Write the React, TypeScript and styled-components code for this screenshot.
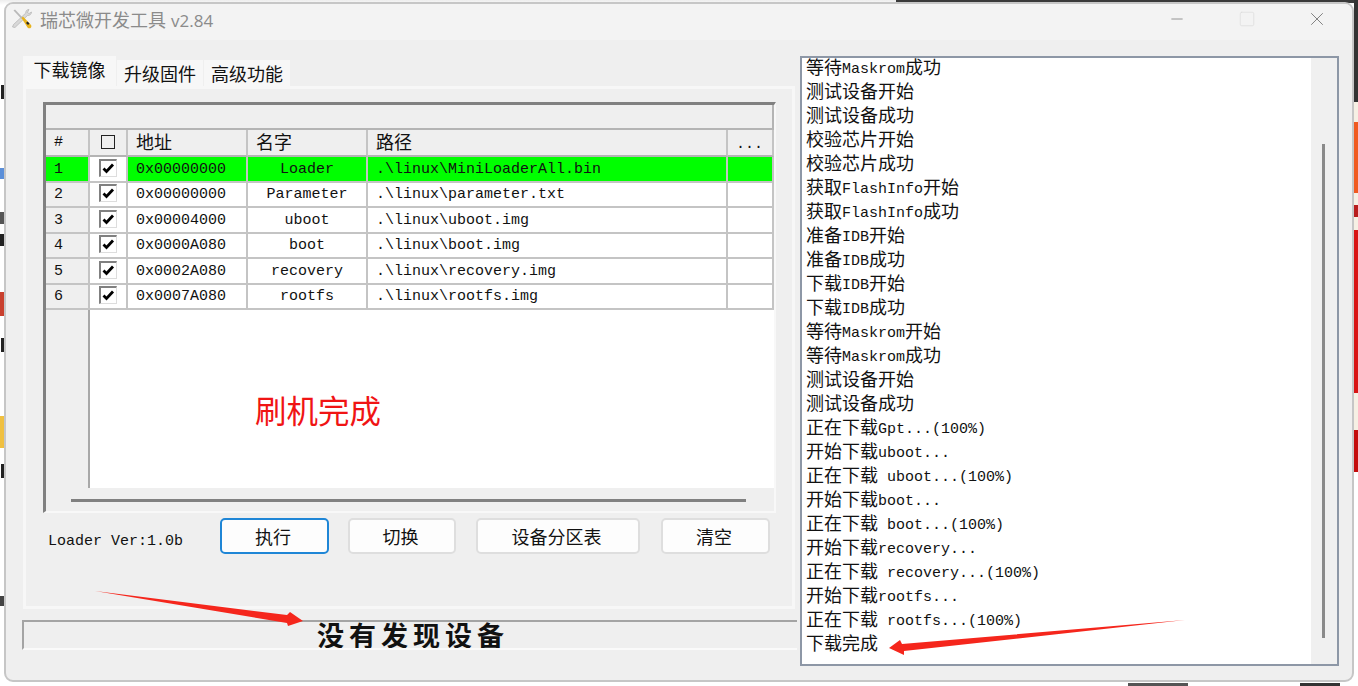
import { createGlobalStyle, styled } from 'styled-components';
import { Minus, Square, X } from 'lucide-react';

const GlobalStyle = createGlobalStyle`
  html, body { margin: 0; padding: 0; background: #fff; }
  * { box-sizing: border-box; }
`;

const CJK = `"Noto Sans CJK SC", "Liberation Sans", sans-serif`;
const MONO = `"Liberation Mono", "Noto Sans CJK SC", monospace`;

const Page = styled.div`
  position: relative;
  width: 1358px;
  height: 686px;
  padding: 2px 4px 4px;
  overflow: hidden;
  background: linear-gradient(#ededed, #fff 5px);
`;

const DesktopBit = styled.div<{ $x: number; $y: number; $w: number; $h: number; $c: string }>`
  position: absolute;
  left: ${(p) => p.$x}px;
  top: ${(p) => p.$y}px;
  width: ${(p) => p.$w}px;
  height: ${(p) => p.$h}px;
  background: ${(p) => p.$c};
`;

const Window = styled.div`
  position: relative;
  display: flex;
  flex-direction: column;
  width: 1350px;
  height: 680px;
  border: 2px solid #c6c6c6;
  border-radius: 9px;
  background: #efefef;
  overflow: hidden;
`;

const TitleBar = styled.div`
  flex: none;
  display: flex;
  align-items: center;
  height: 36px;
  padding: 0 0 6px 5px;
  background: #f3f3f3;
`;

const TitleText = styled.div`
  margin-left: 7px;
  font: 18px ${CJK};
  color: #8b8b8b;
  span { margin-left: 5px; font-family: "Open Sans", sans-serif; font-size: 17px; }
`;

const WinControls = styled.div`
  margin-left: auto;
  display: flex;
  align-items: center;
  color: #777;
`;

const WinControl = styled.div<{ $w: number; $faded?: boolean }>`
  width: ${(p) => p.$w}px;
  display: flex;
  justify-content: center;
  color: ${(p) => (p.$faded ? '#dcdcdc' : '#777')};
`;

const Content = styled.div`
  flex: 1;
  display: flex;
  gap: 3px;
  padding: 16px 0 0 16px;
`;

const LeftColumn = styled.div`
  width: 775px;
  flex: none;
  display: flex;
  flex-direction: column;
`;

const Tabs = styled.div`
  height: 30px;
  display: flex;
  align-items: flex-end;
  padding-left: 1px;
  gap: 1px;
`;

const Tab = styled.div<{ $active?: boolean; $w: number }>`
  width: ${(p) => p.$w}px;
  height: ${(p) => (p.$active ? 30 : 26)}px;
  text-align: center;
  font: 18px/26px ${CJK};
  color: #111;
  background: #f7f7f7;
`;

const TabPanel = styled.div`
  width: 772px;
  height: 523px;
  margin-left: 1px;
  padding: 13px 16px 0 17px;
  background: #efefef;
  border: 3px solid #f7f7f7;
`;

const TableFrame = styled.div`
  display: flex;
  flex-direction: column;
  width: 733px;
  height: 411px;
  border-top: 3px solid #808080;
  border-left: 3px solid #808080;
  border-right: 2px solid #f8f8f8;
  border-bottom: 2px solid #f8f8f8;
`;

const EmptyHeader = styled.div`
  flex: none;
  height: 25px;
  border-right: 2px solid #b4b4b4;
  border-bottom: 2px solid #b4b4b4;
`;

const Row = styled.div`
  flex: none;
  display: grid;
  grid-template-columns: 44px 38px 120px 120px 360px 46px;
`;

const HeadCell = styled.div<{ $center?: boolean; $pad?: number }>`
  height: 27px;
  padding: 0 0 3px ${(p) => p.$pad ?? 8}px;
  display: flex;
  align-items: center;
  justify-content: ${(p) => (p.$center ? 'center' : 'flex-start')};
  border-right: 2px solid #c4c4c4;
  border-bottom: 2px solid #b4b4b4;
  font: 18px ${CJK};
  color: #111;
`;

const HeadGlyph = styled.span<{ $low?: boolean }>`
  font: 15px ${MONO};
  margin-top: ${(p) => (p.$low ? 6 : 2)}px;
`;

const HeadBox = styled.div`
  width: 14px;
  height: 14px;
  margin-top: 2px;
  border: 1.5px solid #222;
`;

const Cell = styled.div<{ $green?: boolean; $gray?: boolean; $pad?: number; $center?: boolean; $h: number }>`
  height: ${(p) => p.$h}px;
  padding-left: ${(p) => p.$pad ?? 8}px;
  display: flex;
  align-items: center;
  justify-content: ${(p) => (p.$center ? 'center' : 'flex-start')};
  background: ${(p) => (p.$green ? '#00ff00' : p.$gray ? '#efefef' : '#fff')};
  border-right: 2px solid #c4c4c4;
  border-bottom: 2px solid #c4c4c4;
  font: 15px ${MONO};
  color: #111;
  white-space: pre;
`;

const CheckBox = styled.div`
  width: 18px;
  height: 18px;
  margin-bottom: 3px;
  display: flex;
  align-items: center;
  justify-content: center;
  background: #fff;
  border-top: 2px solid #808080;
  border-left: 2px solid #808080;
  border-right: 1px solid #ddd;
  border-bottom: 1px solid #ddd;
`;

const BlankArea = styled.div`
  flex: 1;
  display: flex;
`;

const BlankGutter = styled.div`
  width: 44px;
  flex: none;
  background: #efefef;
  border-right: 2px solid #a8a8a8;
`;

const BlankBody = styled.div`
  flex: 1;
  padding: 77px 0 0 165px;
  background: #fff;
`;

const DoneText = styled.div`
  font: 31.5px/44px ${CJK};
  color: #f01414;
`;

const ScrollRow = styled.div`
  flex: none;
  height: 23px;
  padding: 11px 28px 0 25px;
`;

const ScrollLine = styled.div`
  height: 3px;
  background: #808080;
`;

const Toolbar = styled.div`
  display: flex;
  align-items: center;
  height: 36px;
  margin-top: 5px;
  padding-left: 5px;
`;

const LoaderVer = styled.div`
  width: 172px;
  padding-top: 11px;
  font: 15px ${MONO};
  color: #111;
`;

const Button = styled.button<{ $w: number; $gap?: number; $primary?: boolean }>`
  width: ${(p) => p.$w}px;
  height: 36px;
  margin-right: ${(p) => p.$gap ?? 0}px;
  padding: 0 3px 0 0;
  border: ${(p) => (p.$primary ? '2px solid #1f86d6' : '2px solid #dedede')};
  border-radius: 5px;
  background: #fdfdfd;
  font: 18px ${CJK};
  color: #111;
`;

const StatusBar = styled.div`
  width: 775px;
  height: 30px;
  margin-top: 11px;
  padding-left: 5px;
  overflow: hidden;
  text-align: center;
  border-top: 2px solid #a4a4a4;
  border-left: 2px solid #a4a4a4;
  border-bottom: 2px solid #fafafa;
  font: 700 27px/26px ${CJK};
  letter-spacing: 5px;
  color: #111;
`;

const ListBox = styled.div`
  display: flex;
  width: 539px;
  height: 610px;
  border: 2px solid #8d97a6;
  background: #fff;
`;

const LogLines = styled.div`
  flex: 1;
  padding-left: 4px;
`;

const LogLine = styled.div`
  height: 24px;
  font: 18px/16px ${CJK};
  color: #111;
  white-space: pre;
  span { font: 15px/16px ${MONO}; vertical-align: 1px; }
`;

const ScrollTrack = styled.div`
  flex: none;
  width: 26px;
  padding: 86px 0 26px 11px;
  background: #f0f0f0;
`;

const ScrollThumb = styled.div`
  width: 3px;
  height: 100%;
  background: #8a8a8a;
`;

const Arrows = styled.svg`
  position: absolute;
  inset: 0;
  pointer-events: none;
`;

type Part = { id: number; addr: string; name: string; path: string };

const parts: Part[] = [
  { id: 1, addr: '0x00000000', name: 'Loader', path: '.\\linux\\MiniLoaderAll.bin' },
  { id: 2, addr: '0x00000000', name: 'Parameter', path: '.\\linux\\parameter.txt' },
  { id: 3, addr: '0x00004000', name: 'uboot', path: '.\\linux\\uboot.img' },
  { id: 4, addr: '0x0000A080', name: 'boot', path: '.\\linux\\boot.img' },
  { id: 5, addr: '0x0002A080', name: 'recovery', path: '.\\linux\\recovery.img' },
  { id: 6, addr: '0x0007A080', name: 'rootfs', path: '.\\linux\\rootfs.img' },
];

const logs = [
  '等待Maskrom成功',
  '测试设备开始',
  '测试设备成功',
  '校验芯片开始',
  '校验芯片成功',
  '获取FlashInfo开始',
  '获取FlashInfo成功',
  '准备IDB开始',
  '准备IDB成功',
  '下载IDB开始',
  '下载IDB成功',
  '等待Maskrom开始',
  '等待Maskrom成功',
  '测试设备开始',
  '测试设备成功',
  '正在下载Gpt...(100%)',
  '开始下载uboot...',
  '正在下载 uboot...(100%)',
  '开始下载boot...',
  '正在下载 boot...(100%)',
  '开始下载recovery...',
  '正在下载 recovery...(100%)',
  '开始下载rootfs...',
  '正在下载 rootfs...(100%)',
  '下载完成',
];

// bits of whatever is behind the window, visible at the screenshot edges
const desktopBits = [
  { x: 896, y: 0, w: 462, h: 3, c: '#3a3a3a' },
  { x: 1354, y: 0, w: 4, h: 102, c: '#333' },
  { x: 1354, y: 102, w: 4, h: 370, c: '#f6f0e4' },
  { x: 1354, y: 122, w: 4, h: 71, c: '#f05a20' },
  { x: 1354, y: 205, w: 4, h: 12, c: '#b81c1c' },
  { x: 1354, y: 230, w: 4, h: 163, c: '#d81414' },
  { x: 1354, y: 430, w: 4, h: 42, c: '#c40c0c' },
  { x: 0, y: 168, w: 4, h: 11, c: '#5b8fd9' },
  { x: 0, y: 292, w: 4, h: 24, c: '#c9402e' },
  { x: 0, y: 416, w: 4, h: 32, c: '#f0c040' },
  { x: 1, y: 85, w: 3, h: 14, c: '#222' },
  { x: 0, y: 212, w: 4, h: 12, c: '#555' },
  { x: 0, y: 234, w: 4, h: 12, c: '#222' },
  { x: 1, y: 338, w: 3, h: 14, c: '#222' },
  { x: 1, y: 464, w: 3, h: 14, c: '#222' },
  { x: 0, y: 596, w: 4, h: 10, c: '#444' },
  { x: 1300, y: 683, w: 40, h: 3, c: '#333' },
  { x: 1128, y: 683, w: 60, h: 3, c: '#555' },
];

// latin runs are set smaller than the chinese, like the bitmap font in the original
function LogText({ text }: { text: string }) {
  return (
    <LogLine>
      {text.split(/([\x20-\x7e]+)/).map((chunk, i) =>
        /^[\x20-\x7e]+$/.test(chunk) ? <span key={i}>{chunk}</span> : chunk
      )}
    </LogLine>
  );
}

function ToolIcon() {
  return (
    <svg width="22" height="22" viewBox="0 0 22 22">
      <path d="M18 1.500c-2 0-3.500 1.500-3.200 3.500L2.500 16.500 1.500 19l2.500.5L16.500 7.500c2 .3 4-1.200 4-3.500l-2.500 1.500-1.500-1L18 1.500z" fill="#d8d8d8" stroke="#aaa" strokeWidth="0.6" />
      <path d="M2.500 2.500l1.500-1 7.500 8-1 1.500z" fill="#b9b9b9" />
      <path d="M10.500 10l1.500-1.500 8 8.500c.8 1 .2 2.500-.5 3s-2 .5-3-.5z" fill="#e8b31c" />
      <path d="M15 15l1.500-1.500 2 2-1.500 1.500z" fill="#222" />
    </svg>
  );
}

function Check() {
  return (
    <svg width="13" height="13" viewBox="0 0 13 13">
      <path d="M1.500 6.500l3 3L11 2.500" fill="none" stroke="#000" strokeWidth="2.800" />
    </svg>
  );
}

export default function App() {
  return (
    <Page>
      <GlobalStyle />
      {desktopBits.map((b, i) => (
        <DesktopBit key={i} $x={b.x} $y={b.y} $w={b.w} $h={b.h} $c={b.c} />
      ))}
      <Window>
        <TitleBar>
          <ToolIcon />
          <TitleText>
            瑞芯微开发工具<span>v2.84</span>
          </TitleText>
          <WinControls>
            <WinControl $w={70}>
              <Minus size={18} strokeWidth={1} />
            </WinControl>
            <WinControl $w={70} $faded>
              <Square size={18} strokeWidth={1} />
            </WinControl>
            <WinControl $w={70}>
              <X size={22} strokeWidth={1} />
            </WinControl>
          </WinControls>
        </TitleBar>
        <Content>
          <LeftColumn>
            <Tabs>
              <Tab $active $w={93}>下载镜像</Tab>
              <Tab $w={86}>升级固件</Tab>
              <Tab $w={86}>高级功能</Tab>
            </Tabs>
            <TabPanel>
              <TableFrame>
                <EmptyHeader />
                <Row>
                  <HeadCell><HeadGlyph>#</HeadGlyph></HeadCell>
                  <HeadCell $pad={0} $center><HeadBox /></HeadCell>
                  <HeadCell>地址</HeadCell>
                  <HeadCell>名字</HeadCell>
                  <HeadCell>路径</HeadCell>
                  <HeadCell><HeadGlyph $low>...</HeadGlyph></HeadCell>
                </Row>
                {parts.map((part) => {
                  const green = part.id === 1;
                  const h = part.id % 2 === 0 ? 25 : 26;
                  return (
                    <Row key={part.id}>
                      <Cell $h={h} $green={green} $gray={!green}>{part.id}</Cell>
                      <Cell $h={h} $pad={0} $center><CheckBox><Check /></CheckBox></Cell>
                      <Cell $h={h} $green={green}>{part.addr}</Cell>
                      <Cell $h={h} $green={green} $pad={0} $center>{part.name}</Cell>
                      <Cell $h={h} $green={green}>{part.path}</Cell>
                      <Cell $h={h} $green={green} />
                    </Row>
                  );
                })}
                <BlankArea>
                  <BlankGutter />
                  <BlankBody>
                    <DoneText>刷机完成</DoneText>
                  </BlankBody>
                </BlankArea>
                <ScrollRow>
                  <ScrollLine />
                </ScrollRow>
              </TableFrame>
              <Toolbar>
                <LoaderVer>Loader Ver:1.0b</LoaderVer>
                <Button $primary $w={109} $gap={19}>执行</Button>
                <Button $w={108} $gap={20}>切换</Button>
                <Button $w={164} $gap={21}>设备分区表</Button>
                <Button $w={109}>清空</Button>
              </Toolbar>
            </TabPanel>
            <StatusBar>没有发现设备</StatusBar>
          </LeftColumn>
          <ListBox>
            <LogLines>
              {logs.map((line, i) => (
                <LogText key={i} text={line} />
              ))}
            </LogLines>
            <ScrollTrack>
              <ScrollThumb />
            </ScrollTrack>
          </ListBox>
        </Content>
      </Window>
      <Arrows width="1358" height="686" viewBox="0 0 1358 686">
        <polygon points="95,591 287,615 290,612 303,621 288,626 287,623" fill="#f5261c" />
        <polygon points="1185,620 902,644 900,640 889,648 904,655 904,651" fill="#f5261c" />
      </Arrows>
    </Page>
  );
}
